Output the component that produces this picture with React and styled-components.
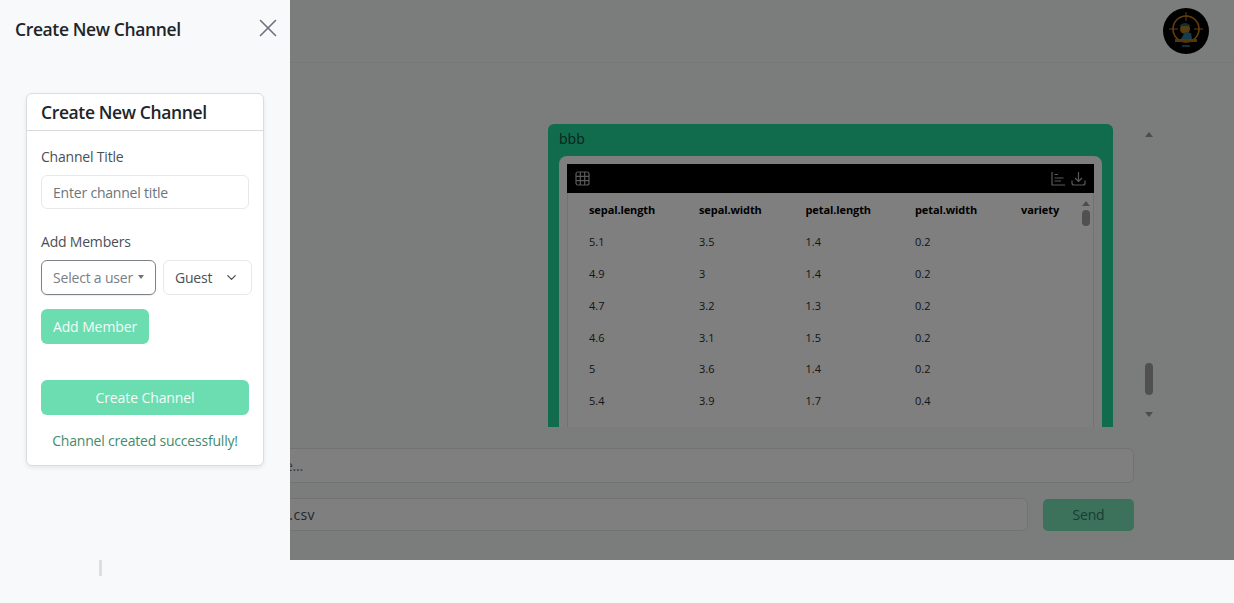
import React from 'react';
import styled, { createGlobalStyle } from 'styled-components';
import { X, ChevronDown } from 'lucide-react';

const Global = createGlobalStyle`
  html, body { margin: 0; padding: 0; height: 100%; background: #f8f9fa; overflow: hidden; }
  * { box-sizing: border-box; }
  body { font-family: "Open Sans", "Noto Sans", sans-serif; color: #212529; letter-spacing: -0.2px; }
`;
const Page = styled.div`position: relative; width: 1234px; height: 603px; background: #f8f9fa; overflow: hidden;`;
const Main = styled.div`position: relative; height: 560px; display: flex; flex-direction: column; background: #f6f9f8;`;
const Backdrop = styled.div`position: absolute; inset: 0; background: rgba(0, 0, 0, 0.5); pointer-events: none;`;
const Header = styled.header`height: 63px; flex: none; display: flex; justify-content: flex-end; align-items: flex-start; padding: 8px 25px 0 0; border-bottom: 1px solid #ecefee;`;
const Chat = styled.section`height: 364px; flex: none; display: flex; padding: 61px 0 0 548px; align-items: flex-start;`;
const Clip = styled.div`width: 565px; height: 303px; overflow: hidden;`;
const Bubble = styled.div`background: #22d69b; border-radius: 6px 6px 0 0; padding: 5px 11px 0; height: 400px;`;
const BubbleName = styled.div`font-size: 14px; line-height: 20px; color: #0a4a34; margin-bottom: 7px; letter-spacing: 0;`;
const Inner = styled.div`background: #fdfdfd; border-radius: 8px 8px 0 0; padding: 8px 8px 0; height: 400px;`;
const Black = styled.div`background: #000; height: 29px; display: flex; align-items: center; justify-content: space-between; padding: 0 8px 0 8px;`;
const IconRow = styled.div`display: flex; gap: 5px; align-items: center;`;
const ToolIcon = styled.svg`width: 15px; height: 15px; display: block; fill: none; stroke: #b4b4b4; stroke-width: 1.2;`;
const TableWrap = styled.div`position: relative; background: #ffffff; height: 300px; border-left: 1px solid #e4e4e4; border-right: 1px solid #e4e4e4;`;
const DataTable = styled.div`display: grid; grid-template-columns: 110px 106.5px 109.5px 106px 70px; padding: 1px 0 0 21px;`;
const Cell = styled.div`height: 31.8px; display: flex; align-items: center; font-size: 11px; color: ${p => (p.$head ? '#000' : '#2a2a2a')}; font-weight: ${p => (p.$head ? 700 : 400)}; letter-spacing: ${p => (p.$head ? '-0.1px' : '0')};`;
const TinyBar = styled.div`position: absolute; right: 2px; top: 8px; width: 10px; height: 34px; display: flex; flex-direction: column; align-items: center;`;
const UpArrow = styled.span`width: 0; height: 0; border-left: 4px solid transparent; border-right: 4px solid transparent; border-bottom: 5px solid #9a9a9a;`;
const DownArrow = styled.span`width: 0; height: 0; border-left: 4px solid transparent; border-right: 4px solid transparent; border-top: 5px solid #9a9a9a; margin-top: ${p => p.$top}px;`;
const Thumb = styled.span`width: ${p => p.$w}px; height: ${p => p.$h}px; border-radius: 4px; background: #a0a0a0; margin-top: ${p => p.$top}px;`;
const PageBar = styled.div`width: 10px; height: 290px; margin: 8px 0 0 31px; display: flex; flex-direction: column; align-items: center;`;
const Composer = styled.div`padding: 21px 100px 0 120px; display: flex; flex-direction: column; gap: 15px;`;
const Row = styled.div`display: flex; gap: 15px; align-items: center;`;
const Field = styled.div`flex: 1; height: ${p => p.$h}px; border: 1px solid #e2e4e6; border-radius: 6px; background: #fff; display: flex; align-items: center; justify-content: flex-end; font-size: 14px; color: ${p => p.$c};`;
const Tail = styled.span`margin-right: ${p => p.$r}px; letter-spacing: ${p => p.$ls}px;`;
const Send = styled.div`width: 91px; height: 32px; border-radius: 5px; background: #78e2b9; display: flex; align-items: center; justify-content: center; font-size: 14px; color: #2f7d65;`;
const Avatar = styled.svg`width: 46px; height: 46px; display: block;`;

const Drawer = styled.aside`position: absolute; left: 0; top: 0; bottom: 0; width: 290px; background: #f8f9fa; display: flex; flex-direction: column;`;
const DrawerHead = styled.div`height: 93px; flex: none; display: flex; justify-content: space-between; padding: 15px 7px 0 15px; align-items: flex-start;`;
const DrawerTitle = styled.h2`margin: 0; font-size: 17.5px; line-height: 28px; font-weight: 600; color: #212529; letter-spacing: -0.38px;`;
const Close = styled.button`border: 0; background: none; padding: 0; margin-top: -2px; height: 30px; color: #6c757d; display: flex;`;
const Card = styled.div`margin-left: 26px; width: 238px; height: 373px; background: #fff; border: 1px solid #dadcde; border-radius: 6px; box-shadow: 0 2px 4px rgba(0,0,0,.08); flex: none;`;
const CardHead = styled.div`height: 37px; padding: 0 14px; display: flex; align-items: center; border-bottom: 1px solid #d8dadc;`;
const CardTitle = styled.h3`margin: 0; font-size: 17.5px; font-weight: 600; color: #212529; letter-spacing: -0.38px;`;
const CardBody = styled.div`padding: 16px 14px 0;`;
const Label = styled.div`font-size: 14px; line-height: 20px; color: #495057; margin-bottom: ${p => p.$mb}px;`;
const TextInput = styled.div`height: 34px; width: 208px; border: 1px solid #e6e8ea; border-radius: 6px; padding: 0 11px; display: flex; align-items: center; font-size: 14px; color: #6c757d; margin-bottom: 23px;`;
const SelectRow = styled.div`display: flex; gap: 7px; width: 212px; margin-bottom: 14px;`;
const UserSelect = styled.div`width: 115px; height: 35px; border: 1px solid #7d8287; border-radius: 6px; padding: 0 11px; display: flex; align-items: center; justify-content: space-between; font-size: 14px; color: #7a8087; white-space: nowrap; box-shadow: 0 1px 1px rgba(0,0,0,.08);`;
const Caret = styled.span`width: 0; height: 0; border-left: 3.5px solid transparent; border-right: 3.5px solid transparent; border-top: 4px solid #6c757d; margin-top: -1px;`;
const RoleSelect = styled.div`width: 89px; height: 35px; border: 1px solid #e6e8ea; border-radius: 6px; padding: 0 12px 0 11px; display: flex; align-items: center; justify-content: space-between; font-size: 14px; color: #495057;`;
const GreenButton = styled.button`display: block; border: 0; width: ${p => p.$w}px; height: 35px; border-radius: 6px; background: #6cddb1; color: #f2fbf7; font: 400 14px "Open Sans", sans-serif; letter-spacing: -0.1px; padding: 0; margin-bottom: ${p => p.$mb}px;`;
const Success = styled.div`text-align: center; width: 208px; font-size: 14px; color: #3f8c6c; white-space: nowrap; margin-top: 16px;`;
const Handle = styled.div`width: 3px; height: 16px; margin: 94px 0 0 99px; background: #dcdee0;`;

const cols = ['sepal.length', 'sepal.width', 'petal.length', 'petal.width', 'variety'];
const rows = [
  ['5.1', '3.5', '1.4', '0.2'],
  ['4.9', '3', '1.4', '0.2'],
  ['4.7', '3.2', '1.3', '0.2'],
  ['4.6', '3.1', '1.5', '0.2'],
  ['5', '3.6', '1.4', '0.2'],
  ['5.4', '3.9', '1.7', '0.4'],
];

export default function App() {
  return (
    <Page>
      <Global />
      <Main>
        <Header>
          <Avatar viewBox="0 0 46 46">
            <circle cx="23" cy="23" r="23" fill="#000" />
            <circle cx="23" cy="21" r="13" fill="none" stroke="#c47f1c" strokeWidth="1.6" />
            <path d="M23 4v9M23 29v4M6 21h9M31 21h9" stroke="#c47f1c" strokeWidth="1" />
            <circle cx="22" cy="21" r="5" fill="#b07a22" />
            <path d="M16 18q6-6 12 0z" fill="#1f5f70" />
            <path d="M18 31l4-7 6 1 1 6z" fill="#2f7a94" />
            <rect x="12" y="31" width="22" height="3" fill="#a9701a" />
            <rect x="19" y="37" width="8" height="2" fill="#2c5c6e" />
          </Avatar>
        </Header>
        <Chat>
          <Clip>
            <Bubble>
              <BubbleName>bbb</BubbleName>
              <Inner>
                <Black>
                  <ToolIcon viewBox="0 0 15 15">
                    <rect x="1" y="1" width="13" height="13" rx="2" />
                    <path d="M1 5.3h13M1 9.7h13M5.3 1v13M9.7 1v13" />
                  </ToolIcon>
                  <IconRow>
                    <ToolIcon viewBox="0 0 15 15">
                      <path d="M1 1v13h13M3.5 3.5h3.5M3.5 7h9M3.5 10h6.5" />
                    </ToolIcon>
                    <ToolIcon viewBox="0 0 15 15">
                      <path d="M1 9.5V12a2 2 0 0 0 2 2h9a2 2 0 0 0 2-2V9.5M7.5 1v9.5M4 7l3.5 3.5L11 7" />
                    </ToolIcon>
                  </IconRow>
                </Black>
                <TableWrap>
                  <DataTable>
                    {cols.map(c => <Cell key={c} $head>{c}</Cell>)}
                    {rows.map((r, i) => (
                      <React.Fragment key={i}>
                        {r.map((v, j) => <Cell key={j}>{v}</Cell>)}
                        <Cell />
                      </React.Fragment>
                    ))}
                  </DataTable>
                  <TinyBar><UpArrow /><Thumb $w={8} $h={16} $top={4} /></TinyBar>
                </TableWrap>
              </Inner>
            </Bubble>
          </Clip>
          <PageBar>
            <UpArrow />
            <Thumb $w={8} $h={32} $top={226} />
            <DownArrow $top={17} />
          </PageBar>
        </Chat>
        <Composer>
          <Row><Field $h={35} $c="#6c757d"><Tail $r={830} $ls={-0.2}>Type your message here...</Tail></Field></Row>
          <Row>
            <Field $h={33} $c="#495057"><Tail $r={712} $ls={0.4}>iris.csv</Tail></Field>
            <Send>Send</Send>
          </Row>
        </Composer>
        <Backdrop />
      </Main>
      <Drawer>
        <DrawerHead>
          <DrawerTitle>Create New Channel</DrawerTitle>
          <Close aria-label="Close"><X size={30} strokeWidth={1.3} /></Close>
        </DrawerHead>
        <Card>
          <CardHead><CardTitle>Create New Channel</CardTitle></CardHead>
          <CardBody>
            <Label $mb={8}>Channel Title</Label>
            <TextInput>Enter channel title</TextInput>
            <Label $mb={8}>Add Members</Label>
            <SelectRow>
              <UserSelect>Select a user <Caret /></UserSelect>
              <RoleSelect>Guest <ChevronDown size={15} /></RoleSelect>
            </SelectRow>
            <GreenButton $w={108} $mb={36}>Add Member</GreenButton>
            <GreenButton $w={208} $mb={0}>Create Channel</GreenButton>
            <Success>Channel created successfully!</Success>
          </CardBody>
        </Card>
        <Handle />
      </Drawer>
    </Page>
  );
}
